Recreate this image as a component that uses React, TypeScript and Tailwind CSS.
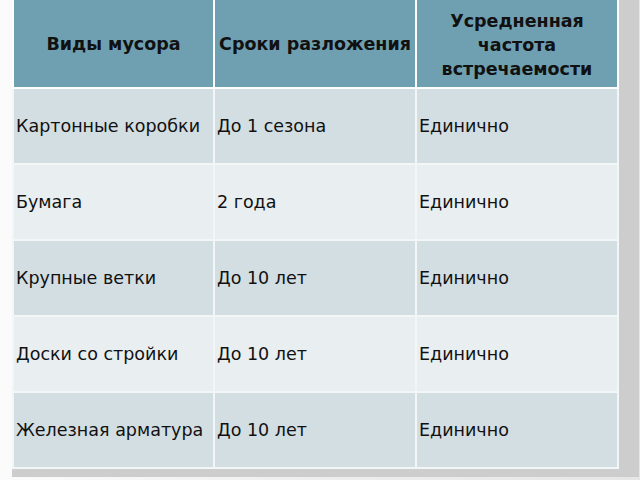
const rows: [string, string, string][] = [
  ["Картонные коробки", "До 1 сезона", "Единично"],
  ["Бумага", "2 года", "Единично"],
  ["Крупные ветки", "До 10 лет", "Единично"],
  ["Доски со стройки", "До 10 лет", "Единично"],
  ["Железная арматура", "До 10 лет", "Единично"],
];

export default function App() {
  return (
    <div
      className="w-[640px] h-[480px] overflow-hidden bg-gradient-to-r from-[#fbfbfb] via-[#eeeeee] to-[#e6e6e6]"
      style={{ fontFamily: '"DejaVu Sans", Verdana, sans-serif' }}
    >
      <div className="pl-[12px]">
        <div className="w-fit bg-[#cdcdcd] pr-[20px] pb-[8px]">
          <table className="table-fixed border-collapse bg-white text-[#111]">
            <colgroup>
              <col className="w-[201px]" />
              <col className="w-[202px]" />
              <col className="w-[202px]" />
            </colgroup>
            <thead>
              <tr className="h-[88px] bg-[#6fa0b1]">
                <th className="border-2 border-white border-t-0 text-center align-middle font-bold text-[17.5px] leading-[24px] px-0 whitespace-nowrap">
                  Виды мусора
                </th>
                <th className="border-2 border-white border-t-0 text-center align-middle font-bold text-[17.5px] leading-[24px] px-0 whitespace-nowrap">
                  Сроки разложения
                </th>
                <th className="border-2 border-white border-t-0 text-center align-middle font-bold text-[17.5px] leading-[24px] px-0 pt-[2px]">
                  Усредненная
                  <br />
                  частота
                  <br />
                  встречаемости
                </th>
              </tr>
            </thead>
            <tbody>
              {rows.map((r, i) => (
                <tr
                  key={i}
                  className={
                    i % 2 === 0 ? "h-[76px] bg-[#d3dee2]" : "h-[76px] bg-[#e9eef0]"
                  }
                >
                  {r.map((c, j) => (
                    <td
                      key={j}
                      className="border-2 border-[#f3f6f7] align-middle text-left text-[17.5px] leading-[20px] px-[2px] whitespace-nowrap"
                    >
                      {c}
                    </td>
                  ))}
                </tr>
              ))}
            </tbody>
          </table>
        </div>
      </div>
    </div>
  );
}
